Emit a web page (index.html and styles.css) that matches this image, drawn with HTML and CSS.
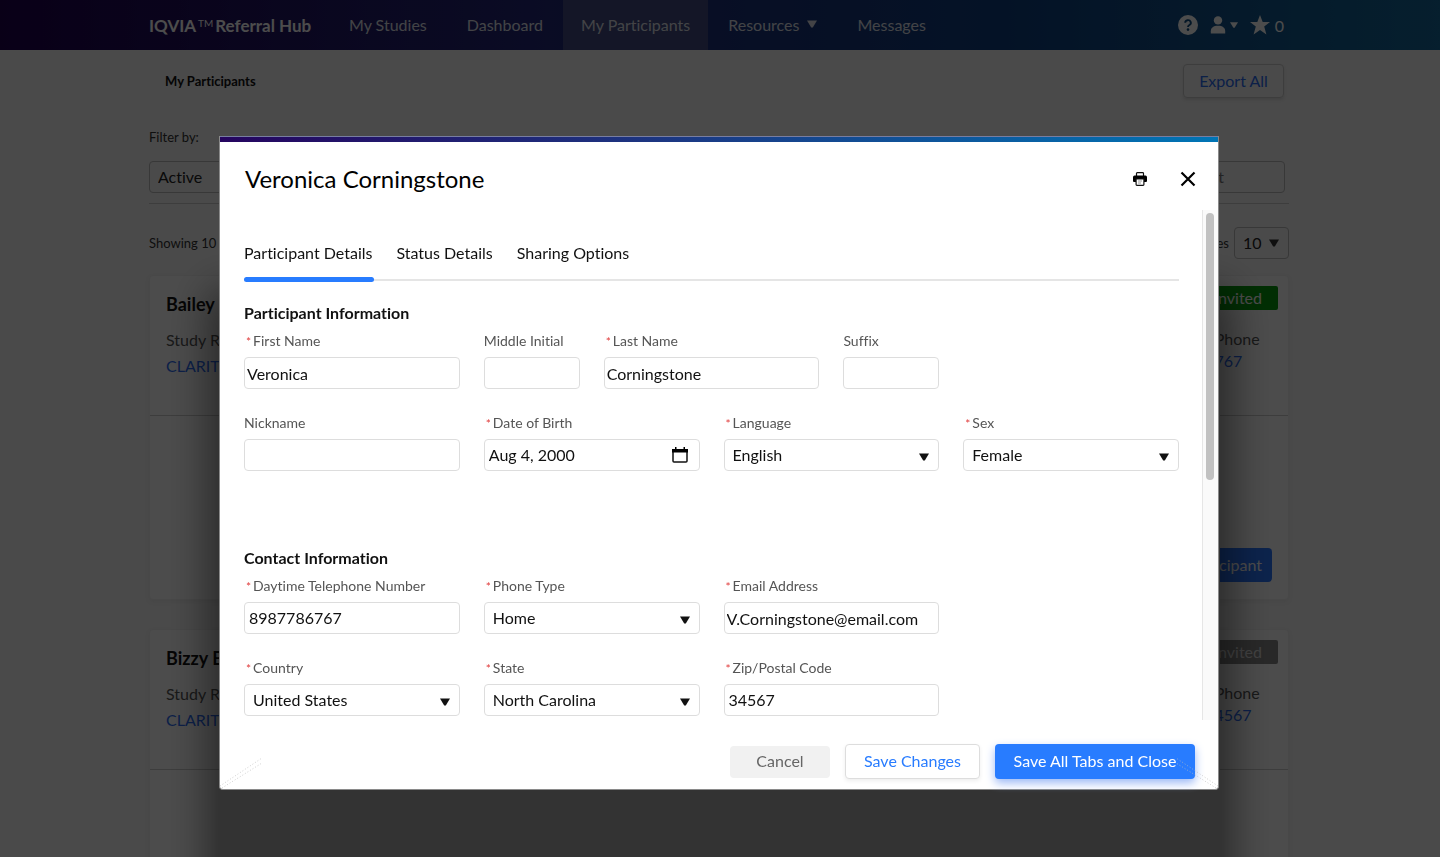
FILE: index.html
```html
<!DOCTYPE html>
<html lang="en">
<head>
<meta charset="utf-8">
<title>IQVIA Referral Hub</title>
<link rel="stylesheet" href="styles.css">
</head>
<body>
<div class="page">
  <header class="topbar">
    <div class="container topbar-inner">
      <a class="brand" href="#">IQVIA<span class="tm">TM</span>Referral Hub</a>
      <nav class="nav">
        <a href="#">My Studies</a>
        <a href="#">Dashboard</a>
        <a href="#" class="active">My Participants</a>
        <a href="#">Resources <svg class="caret" viewBox="0 0 10 8"><path d="M0 0.5h10L5.8 7.5H4.2z"/></svg></a>
        <a href="#">Messages</a>
      </nav>
      <div class="tools">
        <button type="button" aria-label="Help"><svg width="20" height="20" viewBox="0 0 20 20"><circle cx="10" cy="10" r="10" fill="#fff"/><path d="M7.2 7.8a2.8 2.6 0 1 1 4.2 2.2c-1 .6-1.4 1-1.4 2.1" fill="none" stroke="#0c4a80" stroke-width="1.9"/><circle cx="10" cy="14.6" r="1.3" fill="#0c4a80"/></svg></button>
        <button type="button" class="user" aria-label="Account"><svg width="16" height="18" viewBox="0 0 16 18"><circle cx="8" cy="4.4" r="4.2" fill="#fff"/><path d="M.8 17.4v-2.200C.8 11.800 3.400 9.800 8 9.800s7.200 2 7.200 5.400v2.200z" fill="#fff"/></svg><svg class="caret small" viewBox="0 0 10 8"><path d="M0 0.500h10L5.800 7.500H4.200z"/></svg></button>
        <button type="button" class="stars" aria-label="Favorites"><svg width="20" height="20" viewBox="0 0 20 20"><path d="M10 0l2.700 7H20l-5.800 4.600L16.400 19.400 10 15 3.600 19.400l2.200-7.800L0 7h7.300z" fill="#fff"/></svg>0</button>
      </div>
    </div>
  </header>
  <main class="container content">
    <div class="page-head">
      <h1>My Participants</h1>
      <button type="button" class="btn-outline">Export All</button>
    </div>
    <div class="filters">
      <label for="filter">Filter by:</label>
      <div class="filter-row">
        <select id="filter" class="box"><option>Active</option></select>
        <input class="box search" type="text" aria-label="Participant search" placeholder="Participant list">
      </div>
    </div>
    <div class="list-head">
      <span>Showing 10</span>
      <label class="entries" for="count">Entries</label>
      <div class="count"><select id="count" class="box"><option>10</option></select><svg class="caret" viewBox="0 0 10 8"><path d="M0 0.500h10L5.800 7.500H4.200z"/></svg></div>
    </div>
    <article class="card">
      <div class="card-top">
        <div class="person">
          <h2>Bailey</h2>
          <span class="muted">Study Referral</span>
          <a href="#">CLARITY</a>
        </div>
        <div class="contact">
          <span class="badge green">Invited</span>
          <span class="muted">Home Phone</span>
          <a href="#">77867767</a>
        </div>
      </div>
      <div class="card-body"><button type="button" class="btn-solid">Edit Participant</button></div>
    </article>
    <article class="card">
      <div class="card-top">
        <div class="person">
          <h2>Bizzy B</h2>
          <span class="muted">Study Referral</span>
          <a href="#">CLARITY</a>
        </div>
        <div class="contact">
          <span class="badge gray">Invited</span>
          <span class="muted">Home Phone</span>
          <a href="#">919834567</a>
        </div>
      </div>
      <div class="card-body"></div>
    </article>
  </main>
</div>

<div class="overlay">
  <div class="shade"></div>
  <section class="modal" role="dialog" aria-labelledby="modal-title">
    <header class="modal-head">
      <h2 id="modal-title">Veronica Corningstone</h2>
      <button type="button" aria-label="Print"><svg width="14" height="14" viewBox="0 0 14 14"><path d="M3.500 4V1.500Q3.500 .7 4.300 .7h5.400q.8 0 .8.8V4" fill="none" stroke="#111" stroke-width="1.200"/><path d="M1.500 3.600h11q1.500 0 1.500 1.600V9q0 1-1 1h-2V7H3v3H1Q0 10 0 9V5.200q0-1.600 1.500-1.600z" fill="#000"/><path d="M3.100 7h7.800v5.500q0 .8-.8.8H3.900q-.8 0-.8-.8z" fill="#fff" stroke="#111" stroke-width="1.200"/><path d="M5 9h4M5 11h3" stroke="#999" stroke-width="1.200"/></svg></button>
      <button type="button" aria-label="Close"><svg width="16" height="16" viewBox="0 0 16 16"><path d="M1.500 1.500l13 13M14.500 1.500l-13 13" stroke="#000" stroke-width="2.200"/></svg></button>
    </header>
    <div class="modal-body">
      <form class="form" id="details">
        <div class="tabs" role="tablist">
          <button type="button" role="tab" aria-selected="true" class="current">Participant Details</button>
          <button type="button" role="tab">Status Details</button>
          <button type="button" role="tab">Sharing Options</button>
        </div>
        <fieldset class="first">
          <legend>Participant Information</legend>
          <div class="fields">
            <div class="field required"><label for="fn">First Name</label><input id="fn" type="text" value="Veronica"></div>
            <div class="field short"><label for="mi">Middle Initial</label><input id="mi" type="text"></div>
            <div class="field required"><label for="ln">Last Name</label><input id="ln" type="text" value="Corningstone"></div>
            <div class="field short"><label for="sx">Suffix</label><input id="sx" type="text"></div>
            <div class="field newline"><label for="nn">Nickname</label><input id="nn" type="text"></div>
            <div class="field required date"><label for="dob">Date of Birth</label><div class="control"><input id="dob" type="text" value="Aug 4, 2000"><svg class="cal" viewBox="0 0 16 16"><path d="M1 3.500h14V14q0 1-1 1H2q-1 0-1-1z" fill="none" stroke="#111" stroke-width="1.500"/><path d="M0 2h16v3.500H0zM3 0h1.500v3H3zM11.500 0H13v3h-1.500z" fill="#000"/></svg></div></div>
            <div class="field required"><label for="lang">Language</label><div class="control"><select id="lang"><option>English</option></select><svg class="caret" viewBox="0 0 10 8"><path d="M0 0.500h10L5.800 7.500H4.200z"/></svg></div></div>
            <div class="field required"><label for="sex">Sex</label><div class="control"><select id="sex"><option>Female</option></select><svg class="caret" viewBox="0 0 10 8"><path d="M0 0.500h10L5.800 7.500H4.200z"/></svg></div></div>
          </div>
        </fieldset>
        <fieldset>
          <legend>Contact Information</legend>
          <div class="fields">
            <div class="field required indent"><label for="tel">Daytime Telephone Number</label><input id="tel" type="tel" value="8987786767"></div>
            <div class="field required"><label for="pt">Phone Type</label><div class="control"><select id="pt"><option>Home</option></select><svg class="caret" viewBox="0 0 10 8"><path d="M0 0.500h10L5.800 7.500H4.200z"/></svg></div></div>
            <div class="field required"><label for="em">Email Address</label><input id="em" type="email" value="V.Corningstone@email.com"></div>
            <div class="field required newline"><label for="co">Country</label><div class="control"><select id="co"><option>United States</option></select><svg class="caret" viewBox="0 0 10 8"><path d="M0 0.500h10L5.800 7.500H4.200z"/></svg></div></div>
            <div class="field required"><label for="st">State</label><div class="control"><select id="st"><option>North Carolina</option></select><svg class="caret" viewBox="0 0 10 8"><path d="M0 0.500h10L5.800 7.500H4.200z"/></svg></div></div>
            <div class="field required indent"><label for="zip">Zip/Postal Code</label><input id="zip" type="text" value="34567"></div>
          </div>
        </fieldset>
      </form>
      <div class="track"><div class="thumb"></div></div>
    </div>
    <footer class="modal-foot">
      <button type="button" class="cancel">Cancel</button>
      <button type="button" class="save">Save Changes</button>
      <button type="submit" form="details" class="save-all">Save All Tabs and Close</button>
    </footer>
    <svg class="grip left" viewBox="0 0 44 32"><path d="M0 29L42 1M2 31L42 6" fill="none" stroke="#bbb" stroke-dasharray="1 2" stroke-width=".7"/></svg>
    <svg class="grip right" viewBox="0 0 44 32"><path d="M44 29L2 1M42 31L2 6" fill="none" stroke="#bbb" stroke-dasharray="1 2" stroke-width=".7"/></svg>
  </section>
</div>
</body>
</html>
```
FILE: styles.css
```css
* { box-sizing: border-box; }
body {
  margin: 0;
  font-family: Lato, "Open Sans", sans-serif;
  font-size: 16px;
  font-variant-ligatures: none;
  color: #111;
  background: #f7f7f7;
}
button, input, select { font: inherit; color: inherit; margin: 0; font-variant-ligatures: none; }
button { border: 0; background: none; padding: 0; }
select { appearance: none; }
a { color: #2a6bf2; text-decoration: none; }
h1, h2 { margin: 0; }
svg { display: block; }

.page { height: 100vh; overflow: hidden; }
.container { width: 100%; max-width: 1142px; margin: 0 auto; }
.caret { width: 10px; height: 8px; fill: currentColor; }

/* top navigation */
.topbar { background: linear-gradient(90deg, #21004f, #22287a 38%, #0f3f80 70%, #146899); color: #fff; }
.topbar-inner { display: flex; height: 50px; align-items: center; }
.brand { color: #fff; font-weight: 700; font-size: 17px; width: 164px; white-space: nowrap; }
.tm { font-size: 10px; font-weight: 400; vertical-align: 5px; margin: 0 2px; }
.nav { display: flex; height: 100%; margin-left: 16px; }
.nav a { color: #dfe2ea; display: flex; gap: 8px; align-items: center; padding: 0 20px 2px; white-space: nowrap; }
.nav a.active { background: #434a82; padding: 0 18px 2px; }
.tools { display: flex; gap: 12px; align-items: center; margin-left: auto; padding-right: 7px; }
.user { display: flex; align-items: center; gap: 4px; color: #fff; }
.caret.small { width: 8px; }
.stars { display: flex; align-items: center; gap: 5px; color: #fff; }

/* participants list */
.page-head { display: flex; justify-content: space-between; align-items: center; padding: 14px 7px 0 16px; }
.page-head h1 { font-size: 13px; }
.btn-outline { width: 101px; height: 34px; padding-bottom: 2px; border: 1px solid #ccc; border-radius: 4px; color: #2a6bf2; box-shadow: 0 2px 3px #ddd; }
.filters { padding: 30px 4px 10px 0; border-bottom: 1px solid #ccc; margin-right: 2px; }
.filters label { display: block; font-size: 13px; line-height: 18px; margin-bottom: 15px; color: #333; }
.filter-row { display: flex; justify-content: space-between; padding-right: 0; }
.box { height: 32px; border: 1px solid #bbb; border-radius: 4px; background: transparent; padding: 0 8px 2px; color: #222; }
.filter-row .box { width: 170px; }
.search::placeholder { color: #777; }
.list-head { display: flex; align-items: center; padding-top: 23px; font-size: 13px; color: #333; }
.entries { margin-left: auto; margin-right: 5px; }
.count { display: grid; align-items: center; margin-right: 2px; font-size: 16px; }
.count > * { grid-area: 1 / 1; }
.count .box { width: 55px; }
.count .caret { justify-self: end; margin-right: 10px; }
.card { background: #fff; border: 1px solid #f0f0f0; border-radius: 4px; box-shadow: 0 2px 4px #eaeaea; margin: 16px 2px 29px 0; height: 325px; }
.card-top { display: flex; justify-content: space-between; height: 140px; border-bottom: 1px solid #ccc; padding: 10px 10px 0 16px; }
.person, .contact { display: flex; flex-direction: column; line-height: 26px; }
.person h2 { font-size: 18px; font-weight: 700; line-height: 36px; margin-bottom: 5px; }
.muted { color: #555; }
.contact { width: 110px; }
.contact .muted { margin-top: 17px; line-height: 24px; }
.contact a { line-height: 20px; }
.badge { border-radius: 2px; line-height: 24px; text-align: right; padding-right: 16px; color: #ddd; }
.badge.green { background: #059b0d; color: #fff; }
.badge.gray { background: #888; }
.card-body { display: flex; justify-content: flex-end; padding: 132px 16px 0; }
.btn-solid { background: #2a76ff; color: #fff; border-radius: 4px; height: 34px; width: 140px; white-space: nowrap; text-align: right; padding: 0 10px 2px 0; }

/* modal */
.overlay { position: fixed; inset: 0; background: rgba(0, 0, 0, .7); display: flex; flex-direction: column; padding: 136px 18px 67px 16px; }
.shade { position: absolute; top: 300px; bottom: -60px; left: 50%; width: 1000px; margin-left: -500px; background: #333; box-shadow: 0 0 40px 10px rgba(0, 0, 0, .5); }
.modal { position: relative; flex: 1; min-height: 0; width: 100%; max-width: 1000px; margin: 0 auto; background: #fff; border-radius: 0 0 4px 4px; display: flex; flex-direction: column; border: 1px solid #8a8a8a; border-top: 0; }
.modal::before { content: ""; height: 5px; background: linear-gradient(90deg, #25055f, #1d3480 42%, #0075b5); border-top: 1px solid #777da0; }
.modal-head { display: flex; align-items: center; height: 68px; padding: 12px 22px 6px 25px; }
.modal-head h2 { font-size: 24px; font-weight: 400; margin-right: auto; line-height: 32px; color: #000; }
.modal-head button + button { margin-left: 33px; }
.modal-body { flex: 1; min-height: 0; display: flex; overflow: hidden; }
.form { flex: 1; min-width: 0; padding: 24px 23px 0 24px; }
.track { width: 16px; background: #fafafa; border-left: 1px solid #e6e6e6; padding: 3px; }
.thumb { width: 8px; height: 53%; background: #c1c1c1; border-radius: 4px; }

.tabs { display: flex; gap: 24px; border-bottom: 2px solid #e5e5e5; height: 47px; }
.tabs button { position: relative; height: 45px; padding-bottom: 9px; white-space: nowrap; }
.tabs .current::after { content: ""; position: absolute; left: 0; right: -2px; bottom: -3px; height: 5px; border-radius: 3px; background: #287cff; }

fieldset { border: 0; margin: 0; padding: 0; min-width: 0; }
fieldset.first { padding: 22px 0 77px; }
legend { float: left; width: 100%; padding: 0; font-weight: 700; line-height: 20px; margin-bottom: 10px; }
.fields { clear: both; display: grid; grid-template-columns: repeat(8, minmax(0, 1fr)); column-gap: 24px; row-gap: 26px; }
.field { grid-column: span 2; display: flex; flex-direction: column; gap: 8px; }
.field.short { grid-column: span 1; }
.field.newline { grid-column: 1 / span 2; }
.field label { font-size: 14px; line-height: 16px; height: 16px; color: #555; white-space: nowrap; }
.required label::before { content: "*"; color: #e03a3a; font-size: 12px; line-height: 1; margin: 0 2px; }
.field input, .field select { width: 100%; height: 32px; border: 1px solid #ddd; border-radius: 4px; background: #fff; padding: 0 2px; }
.field select { padding: 0 8px 2px; }
.field.indent input, .field.date input { padding: 0 4px 2px; }
.control { display: grid; align-items: center; }
.control > * { grid-area: 1 / 1; }
.control .caret { justify-self: end; margin-right: 10px; margin-top: 3px; pointer-events: none; }
.cal { width: 16px; height: 16px; justify-self: end; margin-right: 12px; }

.modal-foot { display: flex; justify-content: flex-end; align-items: center; gap: 15px; padding: 24px 23px 10px; }
.modal-foot button { height: 35px; border-radius: 4px; white-space: nowrap; }
.modal-foot .cancel { width: 100px; height: 32px; background: #f1f1f1; color: #666; }
.modal-foot .save { width: 135px; border: 1px solid #ddd; color: #287cff; background: #fff; box-shadow: 0 2px 4px #eee; }
.modal-foot .save-all { width: 200px; background: #287cff; color: #fff; box-shadow: 0 4px 10px #9bb8f5; }
.modal-foot button { padding-bottom: 2px; }
.grip { position: absolute; bottom: 0; width: 44px; height: 32px; pointer-events: none; }
.grip.left { left: 0; }
.grip.right { right: 0; }
```
